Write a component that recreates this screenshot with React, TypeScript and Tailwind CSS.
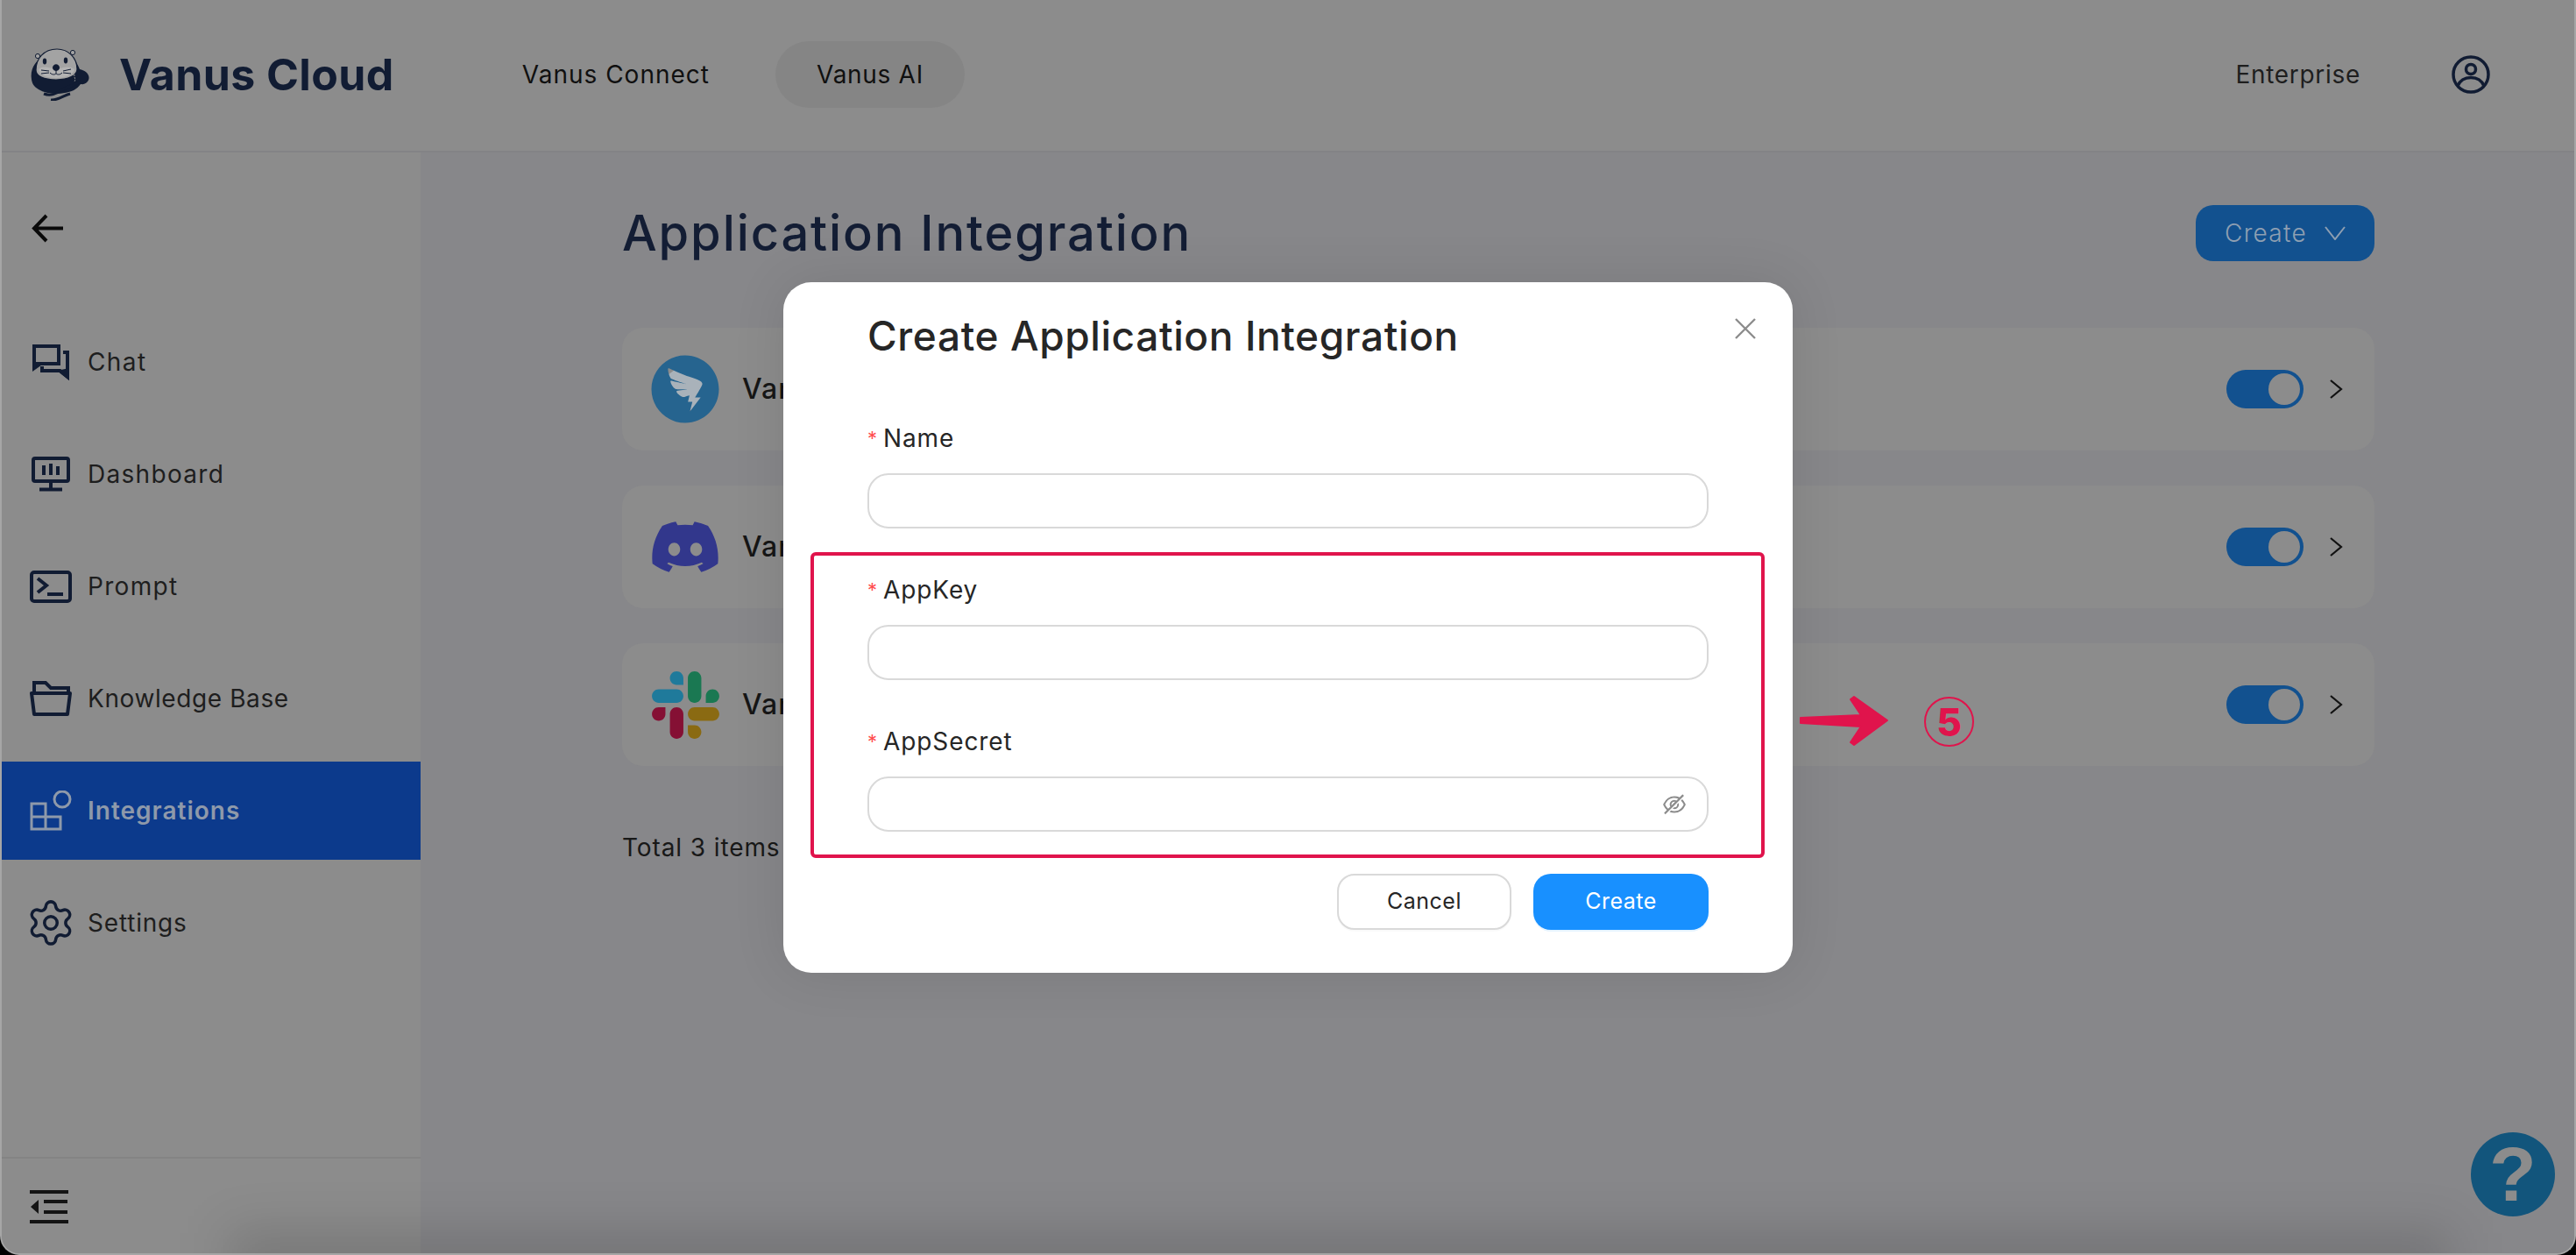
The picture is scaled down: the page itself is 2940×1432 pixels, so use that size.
import { AiFillDingtalkCircle, AiOutlineEyeInvisible } from "react-icons/ai";
import { FaDiscord } from "react-icons/fa6";
import { Settings } from "lucide-react";

const navy = "#111c33";

function Otter() {
  return (
    <svg width="68" height="60" viewBox="0 0 68 60" className="shrink-0">
      <path d="M2 36C0 24 6 16 12 12L48 10C54 16 56 22 57 24C62 25 67 28 67.500 33C68 38 63 42 58 41C54 47 47 50 40 51C30 53 18 52 10 47C5 44 3 41 2 36Z" fill={navy} />
      <path d="M7 25C7 12 16 1 31 1C44 1 54 11 54 24C54 31 44 36 30 36C16 36 7 32 7 25Z" fill="#a3a3a3" stroke={navy} strokeWidth="1.200" />
      <circle cx="9" cy="9" r="2.600" fill="#a3a3a3" stroke={navy} strokeWidth="1" />
      <circle cx="49" cy="5" r="2.600" fill="#a3a3a3" stroke={navy} strokeWidth="1" />
      <path d="M10 24C14 20 22 21 30 25C38 21 46 20 51 24C50 30 42 34 30 34C18 34 11 30 10 24Z" fill="#b3b3b3" />
      <ellipse cx="17" cy="15" rx="2.200" ry="3.400" fill={navy} />
      <ellipse cx="41" cy="14" rx="2.200" ry="3.400" fill={navy} />
      <path d="M26 22C27 17 33 17 34 22C34 25 31 26 30 26C29 26 26 25 26 22Z" fill={navy} />
      <path d="M30 26V29M23 28C26 31 29 30 30 29C31 30 34 31 37 28M13 25L22 26M13 29L22 28M38 26L47 24M38 28L47 29" stroke={navy} strokeWidth="1" fill="none" />
      <path d="M51 30C50 33 53 35 51 38" stroke="#8c8c8c" strokeWidth="1" fill="none" strokeDasharray="2 1" />
      <path d="M16 52C24 55 30 52 36 48C42 44 48 44 58 38" stroke={navy} strokeWidth="3" fill="none" />
      <path d="M24 59C32 60 38 54 46 52" stroke={navy} strokeWidth="3" fill="none" />
    </svg>
  );
}

function ChatIcon({ c }: { c: string }) {
  return (
    <svg width="42" height="41" viewBox="0 0 42 41" fill="none" stroke={c} strokeWidth="4">
      <path d="M2 2H30V22H9L2 27Z" />
      <path d="M35 9H40V37L31.500 30H11V25" />
      <path d="M42 27V41L28 30Z" fill={c} stroke="none" />
      <path d="M0 20V29L11 20Z" fill={c} stroke="none" />
    </svg>
  );
}
function DashIcon({ c }: { c: string }) {
  return (
    <svg width="44" height="40" viewBox="0 0 44 40" fill="none" stroke={c} strokeWidth="4">
      <rect x="2" y="2" width="40" height="26" rx="2" />
      <path d="M14 10V21M22 8V21M30 11V21M22 28V37M9 37.500H35" />
    </svg>
  );
}
function PromptIcon({ c }: { c: string }) {
  return (
    <svg width="48" height="37" viewBox="0 0 48 37" fill="none" stroke={c} strokeWidth="4">
      <rect x="2" y="2" width="44" height="33" rx="3" />
      <path d="M9 9L19 17L9 25M20 27H38" />
    </svg>
  );
}
function FolderIcon({ c }: { c: string }) {
  return (
    <svg width="48" height="40" viewBox="0 0 48 40" fill="none" stroke={c} strokeWidth="4">
      <path d="M5 14V2H18L24 8H44V14" />
      <path d="M2 14H46L43 38H5Z" strokeLinejoin="round" />
    </svg>
  );
}
function IntegrationIcon({ c }: { c: string }) {
  return (
    <svg width="48" height="46" viewBox="0 0 48 46" fill="none" stroke={c} strokeWidth="3">
      <circle cx="37" cy="10" r="9" />
      <path d="M2 15H18V44H2ZM2 30H35V44H18" />
    </svg>
  );
}

function Row({ label, icon, active, track }: { label: string; icon: React.ReactNode; active?: boolean; track: string }) {
  return (
    <div className={`flex h-[112px] items-center ${active ? "bg-[#0c3a8c]" : ""}`}>
      <div className="flex w-[98px] shrink-0 items-center justify-center pl-[14px]">{icon}</div>
      <span className={`text-[28px] ${track} ${active ? "font-semibold text-[#8e99aa]" : "text-[#1e1e1e]"}`}>{label}</span>
    </div>
  );
}

function SlackLogo() {
  return (
    <svg width="77" height="77" viewBox="0 0 2447.6 2452.5">
      <path d="m897.4 0c-135.3.1-244.8 109.900-244.700 245.200-.1 135.300 109.500 245.100 244.800 245.200h244.800v-245.100c.1-135.300-109.500-245.100-244.900-245.300.1 0 .1 0 0 0m0 654h-652.600c-135.300.1-244.900 109.900-244.800 245.200-.2 135.300 109.400 245.100 244.700 245.300h652.700c135.300-.1 244.900-109.900 244.800-245.200.1-135.400-109.500-245.200-244.800-245.300z" fill="#1f7a9b" />
      <path d="m2447.600 899.200c.1-135.300-109.500-245.100-244.800-245.200-135.300.1-244.900 109.900-244.800 245.200v245.300h244.800c135.300-.1 244.900-109.900 244.800-245.300zm-652.700 0v-654c.1-135.200-109.400-245-244.700-245.200-135.300.1-244.900 109.900-244.800 245.200v654c-.2 135.300 109.400 245.100 244.700 245.300 135.300-.1 244.900-109.900 244.800-245.300z" fill="#1a7852" />
      <path d="m1550.100 2452.500c135.300-.1 244.900-109.900 244.800-245.200.1-135.300-109.500-245.100-244.800-245.200h-244.800v245.200c-.1 135.200 109.500 245 244.800 245.200zm0-654.100h652.700c135.300-.1 244.900-109.900 244.800-245.200.2-135.300-109.400-245.100-244.700-245.300h-652.700c-135.300.1-244.900 109.900-244.800 245.200-.1 135.400 109.400 245.200 244.700 245.300z" fill="#8a6a12" />
      <path d="m0 1553.200c-.1 135.300 109.500 245.100 244.800 245.200 135.300-.1 244.900-109.900 244.800-245.200v-245.200h-244.800c-135.300.1-244.900 109.900-244.800 245.200zm652.700 0v654c-.2 135.300 109.400 245.100 244.700 245.300 135.300-.1 244.900-109.900 244.800-245.200v-653.900c.2-135.300-109.400-245.100-244.700-245.300-135.400 0-244.800 109.800-244.800 245.100z" fill="#851034" />
    </svg>
  );
}

function Card({ icon, name }: { icon: React.ReactNode; name: string }) {
  return (
    <div className="flex h-[140px] items-center rounded-[24px] bg-[#8c8c8c] pl-[33px] pr-[36px]">
      <div className="grid w-[78px] shrink-0 place-items-center">{icon}</div>
      <span className="ml-[26px] text-[32px] font-medium tracking-[1px] text-[#161616]">{name}</span>
      <div className="ml-auto flex h-[44px] w-[88px] items-center justify-end rounded-full bg-[#12518f] pr-[4px]">
        <div className="h-[36px] w-[36px] rounded-full bg-[#8c8c8c]" />
      </div>
      <svg width="16" height="24" viewBox="0 0 16 24" fill="none" stroke="#111" strokeWidth="2.200" className="ml-[29px]">
        <path d="M2 2L14 12L2 22" />
      </svg>
    </div>
  );
}

function Field({ label, eye }: { label: string; eye?: boolean }) {
  return (
    <div className="flex flex-col">
      <div className="mb-[18px] flex h-[44px] items-center">
        <span className="mr-[9px] w-[9px] text-[22px] leading-none text-[#ff4d4f]">*</span>
        <span className="text-[28px] tracking-[0.9px] text-[#262626]">{label}</span>
      </div>
      <div className="flex h-[63px] items-center justify-end rounded-[24px] border-2 border-[#d9d9d9] bg-white pr-[22px]">
        {eye && <AiOutlineEyeInvisible size={30} color="#8c8c8c" />}
      </div>
    </div>
  );
}

export default function App() {
  return (
    <div className="h-[1432px] w-[2940px] overflow-hidden bg-black font-[Inter,sans-serif]">
      <div className="relative flex h-full flex-col overflow-hidden rounded-b-[22px] border-x-2 border-b-2 border-[#a6a6a6] bg-[#8c8c8c]">
        <header className="flex h-[174px] shrink-0 items-center border-b-2 border-[#838386] bg-[#8c8c8c] pb-[2px]">
          <div className="ml-[32px] flex items-center">
            <Otter />
            <span className="ml-[34px] text-[50px] font-bold tracking-[0.4px] text-[#111c33]">Vanus Cloud</span>
          </div>
          <nav className="ml-[146px] flex items-center gap-[75px] text-[28px] tracking-[1px] text-[#101010]">
            <span>Vanus Connect</span>
            <span className="flex h-[76px] w-[216px] items-center justify-center rounded-[38px] bg-[#858585] tracking-[0.7px]">Vanus AI</span>
          </nav>
          <span className="ml-auto text-[28px] tracking-[0.7px] text-[#1e1e1e]">Enterprise</span>
          <svg width="44" height="44" viewBox="0 0 44 44" fill="none" stroke={navy} strokeWidth="3.500" className="ml-[104px] mr-[96px]">
            <circle cx="22" cy="22" r="20" />
            <circle cx="22" cy="16" r="5.500" />
            <path d="M7 35C10 28 16 25.500 22 25.500C28 25.500 34 28 37 35" />
          </svg>
        </header>

        <div className="flex min-h-0 flex-1">
          <aside className="flex w-[478px] shrink-0 flex-col bg-[#8c8c8c]">
            <div className="flex h-[183px] shrink-0 items-center pl-[33px]">
              <svg width="38" height="33" viewBox="0 0 38 33" fill="none" stroke="#0a0a0a" strokeWidth="4" className="mb-[10px]">
                <path d="M37 16.500H4M18 2L4 16.500L18 31" />
              </svg>
            </div>
            <div className="flex flex-col gap-[16px]">
              <Row label="Chat" track="tracking-[1.4px]" icon={<ChatIcon c={navy} />} />
              <Row label="Dashboard" track="tracking-[1.3px]" icon={<DashIcon c={navy} />} />
              <Row label="Prompt" track="tracking-[1.3px]" icon={<PromptIcon c={navy} />} />
              <Row label="Knowledge Base" track="tracking-[0.6px]" icon={<FolderIcon c={navy} />} />
              <Row label="Integrations" track="tracking-[1px]" active icon={<IntegrationIcon c="#8e99aa" />} />
              <Row label="Settings" track="tracking-[0.8px]" icon={<Settings size={58} strokeWidth={1.450} color={navy} />} />
            </div>
            <div className="mt-auto flex h-[110px] shrink-0 items-start border-t-2 border-[#848484] pl-[32px] pt-[36px]">
              <svg width="44" height="38" viewBox="0 0 44 38" fill="#141414">
                <path d="M0 0H44V4H0ZM16 11H43V15H16ZM16 23H43V27H16ZM0 34H44V38H0ZM1 19L10 11V27Z" />
              </svg>
            </div>
          </aside>

          <main className="flex-1 bg-[#87878a] pl-[230px] pr-[228px] pt-[60px]">
            <div className="flex h-[64px] items-center justify-between">
              <h1 className="text-[56px] font-medium tracking-[1.9px] text-[#131d34]">Application Integration</h1>
              <button className="flex h-[64px] w-[204px] items-center justify-center gap-[20px] rounded-[20px] bg-[#12518f] text-[28px] font-light tracking-[1.300px] text-[#8e9fb2]">
                Create
                <svg width="24" height="16" viewBox="0 0 24 16" fill="none" stroke="#8e9fb2" strokeWidth="2">
                  <path d="M1 1L12 15L23 1" />
                </svg>
              </button>
            </div>
            <div className="mt-[76px] flex flex-col gap-[40px]">
              <Card
                name="Vanus DingTalk"
                icon={
                  <>
                    <div className="h-[50px] w-[50px] rounded-full bg-[#a9b2ba] [grid-area:1/1]" />
                    <AiFillDingtalkCircle size={88} color="#26648f" className="-mx-[5px] [grid-area:1/1]" />
                  </>
                }
              />
              <Card name="Vanus Discord" icon={<FaDiscord size={82} color="#32378c" className="-mx-[2px]" />} />
              <Card name="Vanus Slack" icon={<SlackLogo />} />
            </div>
            <div className="mt-[76px] text-[28px] leading-[34px] tracking-[0.9px] text-[#181818]">Total 3 items</div>
          </main>
        </div>

        <div className="absolute bottom-[-36px] left-[260px] right-[140px] h-[60px] bg-black/15 blur-[28px]" />
        <div className="absolute right-[22px] bottom-[42px] grid h-[96px] w-[96px] place-items-center rounded-full bg-[#12557c] font-['Liberation_Sans',sans-serif] text-[88px] leading-none font-bold text-[#8c8c8c]">
          ?
        </div>

        <div className="absolute inset-0 flex items-center justify-center pt-[2px]">
          <div className="flex w-[1152px] flex-col rounded-[32px] bg-white px-[96px] pb-[49px] pt-[40px] shadow-[0_0_60px_rgba(0,0,0,0.1)]">
            <div className="flex h-[42px] items-center justify-between">
              <h2 className="text-[46px] font-medium tracking-[0.6px] text-[#262626]">Create Application Integration</h2>
              <svg width="26" height="26" viewBox="0 0 26 26" fill="none" stroke="#8c8c8c" strokeWidth="2.400" className="-mr-[55px] -mt-[16px]">
                <path d="M2 2L24 24M24 2L2 24" />
              </svg>
            </div>
            <div className="mt-[74px] flex flex-col gap-[48px]">
              <Field label="Name" />
              <Field label="AppKey" />
              <Field label="AppSecret" eye />
            </div>
            <div className="mt-[48px] flex justify-end gap-[25px]">
              <button className="h-[64px] w-[199px] rounded-[20px] border-2 border-[#d9d9d9] bg-white text-[25px] tracking-[0.5px] text-[#262626] shadow-[0_2px_0_rgba(0,0,0,0.02)]">Cancel</button>
              <button className="h-[64px] w-[200px] rounded-[20px] bg-[#1890ff] text-[25px] tracking-[0.5px] text-white shadow-[0_2px_0_rgba(5,145,255,0.1)]">Create</button>
            </div>
          </div>
        </div>

        <div className="absolute left-[923px] top-[630px] h-[349px] w-[1089px] rounded-[6px] border-4 border-[#e0144c]" />
        <svg width="106" height="64" viewBox="0 0 106 64" className="absolute left-[2050px] top-[790px]" fill="#e0144c" stroke="#e0144c" strokeWidth="2" strokeLinejoin="round">
          <path d="M3 29L72 26L60 8L64 5L102 32L64 60L60 57L72 39L3 35Z" />
        </svg>
        <div className="absolute left-[2194px] top-[795px] flex h-[57px] w-[57px] items-center justify-center rounded-full border-2 border-[#e0144c] text-[44px] leading-none font-extrabold text-[#e0144c]">
          5
        </div>
      </div>
    </div>
  );
}
